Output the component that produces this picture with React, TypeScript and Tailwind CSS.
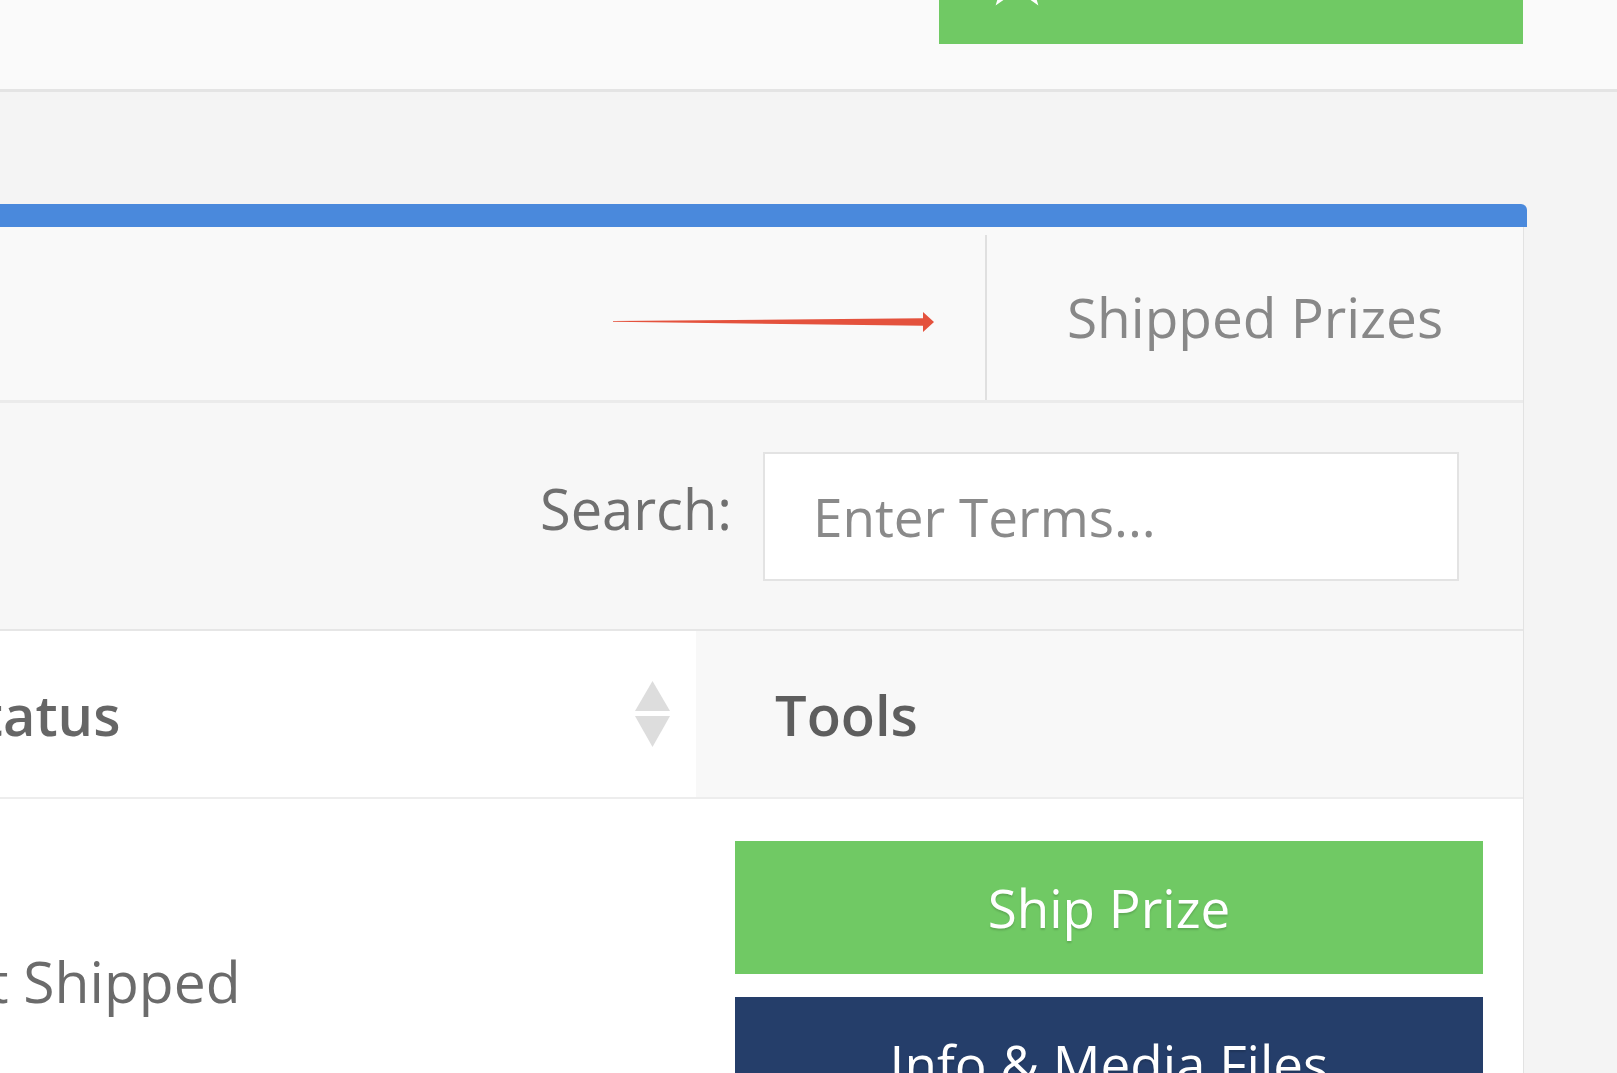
import type { ReactNode } from "react"

function StarIcon() {
  return (
    <svg
      viewBox="0 0 60 60"
      className="absolute left-[39px] top-[-63px] h-[78px] w-[78px] fill-white"
    >
      <polygon points="30,2 36.58,20.94 56.63,21.35 40.65,33.46 46.46,52.65 30,41.2 13.54,52.65 19.35,33.46 3.37,21.35 23.42,20.94" />
    </svg>
  )
}

function SortIcon() {
  return (
    <svg viewBox="0 0 35 66" className="h-[66px] w-[35px] fill-[#dddddd]">
      <polygon points="17.5,0 35,30 0,30" />
      <polygon points="0,35 35,35 17.5,66" />
    </svg>
  )
}

function Arrow() {
  return (
    <svg
      viewBox="0 0 322 22"
      className="pointer-events-none absolute left-[733px] top-[84px] h-[22px] w-[322px]"
    >
      <path
        d="M0 10 L310 7.3 L310 1 L321 11 L310 21 L310 14.7 L0 10.8 Z"
        fill="#e4523d"
      />
    </svg>
  )
}

function ActionButton({ color, children }: { color: string; children: ReactNode }) {
  return (
    <button
      type="button"
      className={`flex h-[133px] w-full items-center justify-center text-[53px] text-white [text-shadow:0_2px_2px_rgba(0,0,0,0.15)] ${color}`}
    >
      {children}
    </button>
  )
}

export default function App() {
  return (
    <div className="min-h-screen w-full overflow-hidden bg-[#f4f4f4] font-['Open_Sans',sans-serif]">
      <header className="flex h-[92px] justify-end border-b-[3px] border-[#e4e4e4] bg-[#fafafa] pr-[94px]">
        <button
          type="button"
          className="relative h-[44px] w-[584px] overflow-hidden bg-[#70c964]"
        >
          <StarIcon />
        </button>
      </header>

      <div className="pt-[112px]">
        <section className="-ml-[120px] w-[1647px]">
          <div className="h-[23px] rounded-tr-[6px] bg-[#4a89dc]" />
          <div className="mr-[3px] border-r border-[#e2e2e2] bg-white">
            {/* tabs */}
            <div className="relative flex h-[176px] justify-end border-b-[3px] border-[#ebebeb] bg-[#f9f9f9]">
              <Arrow />
              <div className="mt-[8px] flex w-[538px] items-center justify-center border-l-2 border-[#e0e0e0] text-[55px] text-[#888888]">
                Shipped Prizes
              </div>
            </div>

            {/* search */}
            <div className="flex h-[228px] items-center justify-end border-b-2 border-[#e6e6e6] bg-[#f7f7f7] pr-[64px]">
              <label className="mb-[16px] mr-[31px] text-[56px] text-[#707070]">
                Search:
              </label>
              <input
                type="text"
                placeholder="Enter Terms..."
                className="h-[129px] w-[696px] border-2 border-[#e3e3e3] bg-white pl-[48px] text-[53px] text-[#555] outline-none placeholder:text-[#8a8a8a]"
              />
            </div>

            {/* table head */}
            <div className="grid h-[168px] grid-cols-[816px_1fr] border-b-2 border-[#ededed]">
              <div className="flex items-center justify-between bg-white pl-[70px] pr-[26px] text-[56px] font-semibold text-[#666666]">
                <span>Status</span>
                <SortIcon />
              </div>
              <div className="flex items-center bg-[#f8f8f8] pl-[79px] text-[56px] font-semibold text-[#5e5e5e]">
                Tools
              </div>
            </div>

            {/* table body */}
            <div className="grid grid-cols-[816px_1fr] bg-white">
              <div className="pl-[31px] pt-[154px] text-[57px] leading-[56px] text-[#6b6b6b]">
                Not Shipped
              </div>
              <div className="flex flex-col gap-[23px] pb-[40px] pl-[39px] pr-[40px] pt-[42px]">
                <ActionButton color="bg-[#70c964]">Ship Prize</ActionButton>
                <ActionButton color="bg-[#253e6a]">Info &amp; Media Files</ActionButton>
              </div>
            </div>
          </div>
        </section>
      </div>
    </div>
  )
}
